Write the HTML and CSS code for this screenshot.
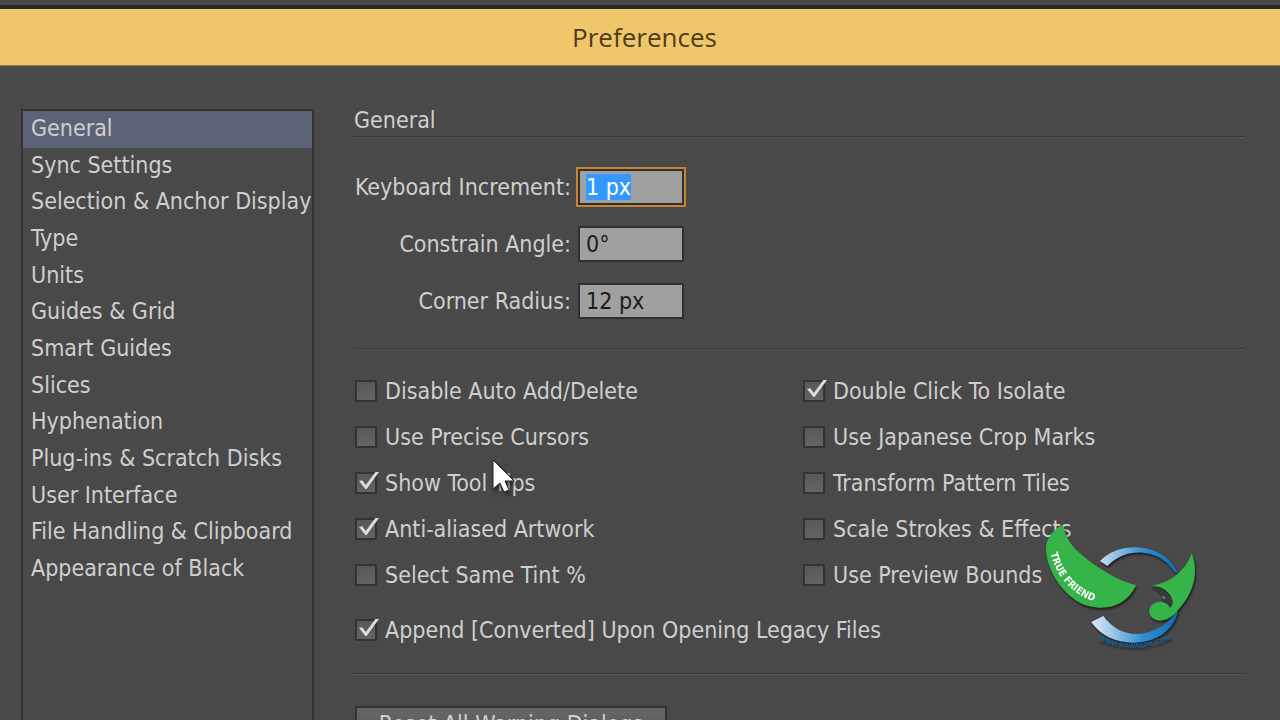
FILE: index.html
```html
<!DOCTYPE html>
<html lang="en">
<head>
    <meta charset="UTF-8">
    <meta name="viewport" content="width=device-width, initial-scale=1.0">
    <title>Preferences</title>
    <link rel="stylesheet" href="styles.css">
</head>
<body>

<div class="dialog">
    <header class="title-bar">
        <h1>Preferences</h1>
    </header>

    <div class="content">
        <nav class="sidebar">
            <ul class="section-list">
                <li class="active"><a href="#general">General</a></li>
                <li><a href="#sync">Sync Settings</a></li>
                <li><a href="#selection">Selection &amp; Anchor Display</a></li>
                <li><a href="#type">Type</a></li>
                <li><a href="#units">Units</a></li>
                <li><a href="#guides">Guides &amp; Grid</a></li>
                <li><a href="#smart-guides">Smart Guides</a></li>
                <li><a href="#slices">Slices</a></li>
                <li><a href="#hyphenation">Hyphenation</a></li>
                <li><a href="#plugins">Plug-ins &amp; Scratch Disks</a></li>
                <li><a href="#interface">User Interface</a></li>
                <li><a href="#files">File Handling &amp; Clipboard</a></li>
                <li><a href="#black">Appearance of Black</a></li>
            </ul>
        </nav>

        <main class="panel">
            <h2>General</h2>

            <div class="fields">
                <label for="increment">Keyboard Increment:</label>
                <input type="text" id="increment" value="1 px">
                <label for="angle">Constrain Angle:</label>
                <input type="text" id="angle" value="0°">
                <label for="radius">Corner Radius:</label>
                <input type="text" id="radius" value="12 px">
            </div>

            <div class="options">
                <div class="option-columns">
                    <div class="column">
                        <label class="option"><input type="checkbox">Disable Auto Add/Delete</label>
                        <label class="option"><input type="checkbox">Use Precise Cursors</label>
                        <label class="option"><input type="checkbox" checked>Show Tool Tips</label>
                        <label class="option"><input type="checkbox" checked>Anti-aliased Artwork</label>
                        <label class="option"><input type="checkbox">Select Same Tint %</label>
                    </div>
                    <div class="column">
                        <label class="option"><input type="checkbox" checked>Double Click To Isolate</label>
                        <label class="option"><input type="checkbox">Use Japanese Crop Marks</label>
                        <label class="option"><input type="checkbox">Transform Pattern Tiles</label>
                        <label class="option"><input type="checkbox">Scale Strokes &amp; Effects</label>
                        <label class="option"><input type="checkbox">Use Preview Bounds</label>
                    </div>
                </div>
                <label class="option"><input type="checkbox" checked>Append [Converted] Upon Opening Legacy Files</label>
            </div>

            <div class="actions">
                <button type="button">Reset All Warning Dialogs</button>
            </div>
        </main>
    </div>
</div>

<!-- Mouse pointer -->
<svg class="pointer" viewBox="0 0 24 38" aria-hidden="true">
    <path d="M2 2V31L9 25L13 34L18 32L14 23H23Z" fill="#fff" stroke="#222" stroke-width="1"/>
</svg>

<!-- Watermark -->
<svg class="watermark" viewBox="60 30 480 405" role="img" aria-label="True Friend">
    <defs>
        <linearGradient id="ring" x1="215" y1="0" x2="475" y2="0" gradientUnits="userSpaceOnUse">
            <stop offset="0" stop-color="#d9e9f7"/>
            <stop offset="0.2" stop-color="#a9cdec"/>
            <stop offset="0.6" stop-color="#2f8dd0"/>
            <stop offset="1" stop-color="#0b6fb8"/>
        </linearGradient>
        <path id="wingLine" d="M92 130C108 200 160 270 275 287"/>
        <path id="siteLine" d="M236 390C300 424 390 424 470 378"/>
    </defs>
    <path d="M240 153C285 108 350 104 402 122C440 137 462 160 474 190L464 187C450 162 424 142 392 132C345 120 300 130 262 168Z" fill="url(#ring)"/>
    <path d="M214 336L250 318C285 365 335 382 388 366C430 352 456 330 474 298C470 338 440 376 390 391C322 410 250 390 214 336Z" fill="url(#ring)"/>
    <path d="M128 44C95 62 76 90 78 122C82 190 140 270 205 288C270 305 325 280 348 226C280 208 215 160 180 130C150 102 138 80 128 44Z" fill="#36b449"/>
    <path d="M393 226C450 220 500 180 515 128C538 190 520 250 474 300C458 322 438 332 418 332C396 330 386 314 388 299C392 280 410 272 428 276C440 278 446 284 450 293C455 290 459 281 457 271C452 248 428 230 393 226Z" fill="#36b449"/>
    <path d="M393 227C424 234 450 250 457 271C459 281 455 290 450 293C446 284 440 278 428 276C434 262 418 240 393 227Z" fill="#393c3e"/>
    <path d="M424 257L438 264L431 266Z" fill="#9aa0a2"/>
    <text class="wing-text"><textPath href="#wingLine">TRUE FRIEND</textPath></text>
    <text class="site-text"><textPath href="#siteLine">WWW.RAWAEPK.COM</textPath></text>
</svg>

<script>
    // Start with the first value ready to be typed over
    const increment = document.getElementById("increment");
    increment.focus();
    increment.select();
</script>

</body>
</html>
```

FILE: styles.css
```css
* {
    box-sizing: border-box;
}

body {
    margin: 0;
    font-family: 'DejaVu Sans Condensed', 'DejaVu Sans', sans-serif;
    font-size: 23px;
    line-height: 28px;
    color: #cfcfcf;
    background-color: #494949;
}

/* Dialog */
.dialog {
    display: flex;
    flex-direction: column;
    height: 100vh;
    padding-top: 5px;
    overflow: hidden;
}

.title-bar {
    flex: none;
    padding: 14px;
    background-color: #efc669;
    border-top: 4px solid #2b2924;
    border-bottom: 1px solid #947d4b;
    text-align: center;
}

.title-bar h1 {
    margin: 0 0 0 9px;
    font-family: 'Open Sans', 'Noto Sans', sans-serif;
    font-size: 26px;
    font-weight: 400;
    line-height: 28px;
    color: #4d3c1b;
}

.content {
    display: flex;
    flex: 1;
    gap: 40px;
    min-height: 0;
    padding: 43px 35px 0 21px;
}

/* Section list */
.sidebar {
    flex: none;
    width: 293px;
    border: 2px solid #333;
    border-bottom: none;
}

.section-list {
    display: grid;
    grid-template-columns: minmax(0, 1fr);
    grid-auto-rows: 1fr;
    height: 477px;
    margin: 0;
    padding: 0;
    list-style: none;
}

.section-list li {
    display: flex;
    align-items: center;
    padding: 0 8px 3px;
}

.section-list a {
    color: inherit;
    text-decoration: none;
    white-space: nowrap;
}

.section-list .active {
    background-color: #5d6376;
}

/* Settings panel */
.panel {
    flex: 1;
    min-width: 0;
}

.panel h2 {
    margin: 0;
    padding-bottom: 4px;
    font-size: 23px;
    font-weight: 400;
    line-height: 23px;
    border-bottom: 1px solid #383838;
}

.fields {
    display: grid;
    grid-template-columns: 217px 106px;
    gap: 21px 7px;
    align-items: center;
    padding: 31px 0 29px;
    border-top: 1px solid #555;
}

.fields label {
    justify-self: end;
    white-space: nowrap;
}

.fields input {
    width: 100%;
    height: 36px;
    padding: 0 6px;
    font: inherit;
    color: #1c1c1c;
    background-color: #a0a0a0;
    border: 2px solid #303030;
}

.fields input:focus {
    outline: 2px solid #c98335;
}

.fields input::selection {
    color: #fff;
    background-color: #3399ff;
}

/* Check boxes */
.options {
    padding: 28px 0 29px;
    border-top: 1px solid #383838;
    box-shadow: inset 0 1px #555;
}

.option-columns {
    display: grid;
    grid-template-columns: 448px 1fr;
    margin-bottom: 27px;
}

.column {
    display: grid;
    gap: 18px;
}

.option {
    display: flex;
    align-items: center;
    gap: 8px;
    padding-left: 1px;
    white-space: nowrap;
}

.option input {
    position: relative;
    width: 22px;
    height: 22px;
    margin: 0;
    appearance: none;
    background-image: linear-gradient(#585858, #646464);
    border: 2px solid #333;
}

.option input:checked::after {
    content: "";
    position: absolute;
    top: -2px;
    left: 2px;
    width: 20px;
    height: 18px;
    background-color: #dcdcdc;
    clip-path: polygon(0 50%, 16% 46%, 34% 72%, 82% 0, 100% 0, 38% 94%, 32% 94%);
}

/* Buttons */
.actions {
    padding: 32px 1px;
    border-top: 1px solid #383838;
    box-shadow: inset 0 1px #555;
}

.actions button {
    width: 312px;
    height: 36px;
    padding: 0;
    font: inherit;
    color: #cfcfcf;
    background-image: linear-gradient(#666, #585858);
    border: 2px solid #333;
}

/* Overlays */
.pointer {
    position: absolute;
    top: 458px;
    left: 491px;
    width: 24px;
    height: 38px;
    filter: drop-shadow(2px 3px 2px rgba(0, 0, 0, 0.5));
}

.watermark {
    position: absolute;
    top: 520px;
    left: 1040px;
    width: 160px;
    height: 135px;
    filter: drop-shadow(1px 2px 1px rgba(0, 0, 0, 0.6));
}

.wing-text {
    font: bold 30px 'DejaVu Sans Condensed', sans-serif;
    fill: #fff;
}

.site-text {
    font: bold 21px 'Liberation Sans', sans-serif;
    fill: #1265a3;
}
```
